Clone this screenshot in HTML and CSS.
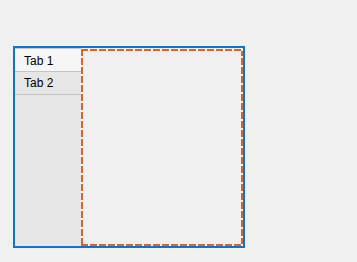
FILE: index.html
```html
<!DOCTYPE html>
<html>
<head>
<meta charset="utf-8">
<link rel="stylesheet" href="styles.css">
</head>
<body>
<div class="frame">
  <div class="tabs">
    <div class="tab selected">Tab 1</div>
    <div class="tab">Tab 2</div>
  </div>
  <div class="content">
    <div class="page"></div>
  </div>
</div>
</body>
</html>
```
FILE: styles.css
```css
html, body {
  margin: 0;
  padding: 0;
  background: #f0f0f0;
  font-family: "Liberation Sans", Arial, sans-serif;
}
body {
  padding: 46px 0 0 13px;
}
.frame {
  width: 228px;
  height: 198px;
  border: 2px solid #0a74d0;
  display: flex;
  background: #f0f0f0;
}
.tabs {
  width: 66px;
  background: #e6e6e6;
  border-top: 1px solid #c8c8c8;
  display: flex;
  flex-direction: column;
}
.tab {
  height: 22px;
  line-height: 22px;
  border-bottom: 1px solid #c4c4c4;
  padding-left: 9px;
  font-size: 12px;
  color: #000;
}
.tab.selected {
  background: #f6f6f6;
  line-height: 24px;
}
.content {
  flex: 1;
  padding-top: 1px;
  display: flex;
  background: #f2f2f2;
}
.page {
  flex: 1;
  background-color: #f0f0f0;
  background-image:
    repeating-linear-gradient(90deg, #e0602a 0 7px, #f7f7f7 7px 9px),
    repeating-linear-gradient(90deg, #e0602a 0 7px, #f7f7f7 7px 9px),
    repeating-linear-gradient(180deg, #e0602a 0 7px, #f7f7f7 7px 9px),
    repeating-linear-gradient(180deg, #e0602a 0 7px, #f7f7f7 7px 9px);
  background-size: 100% 2px, 100% 2px, 2px 100%, 2px 100%;
  background-position: 0 0, 0 100%, 0 0, 100% 0;
  background-repeat: no-repeat;
}
```
